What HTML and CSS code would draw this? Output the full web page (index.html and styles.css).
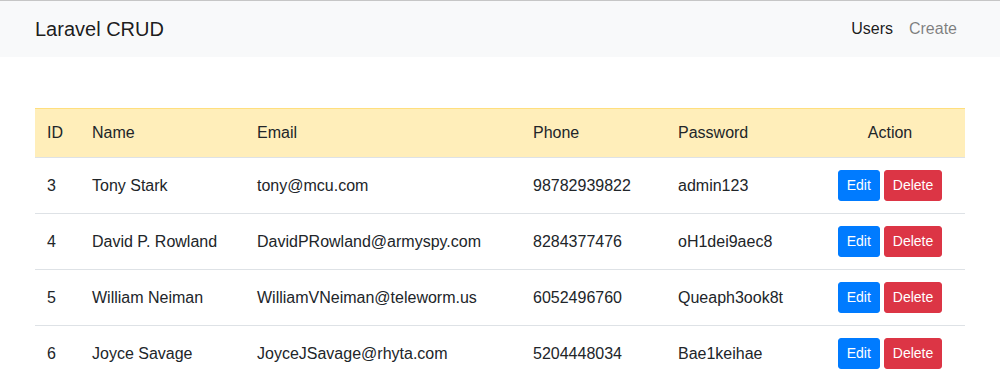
FILE: index.html
```html
<!DOCTYPE html>
<html lang="en">
<head>
  <meta charset="UTF-8">
  <title>Laravel CRUD</title>
  <meta name="viewport" content="width=device-width, initial-scale=1.0">
  <link rel="stylesheet" href="styles.css">
</head>
<body>
  <nav class="navbar">
    <div class="container nav-inner">
      <a class="brand" href="#">Laravel CRUD</a>
      <div class="nav-links">
        <a class="nav-link active" href="#">Users</a>
        <a class="nav-link" href="#">Create</a>
      </div>
    </div>
  </nav>

  <div class="container main">
    <table class="users">
      <thead>
        <tr>
          <th class="c-id">ID</th>
          <th class="c-name">Name</th>
          <th class="c-email">Email</th>
          <th class="c-phone">Phone</th>
          <th class="c-pass">Password</th>
          <th class="c-action">Action</th>
        </tr>
      </thead>
      <tbody>
        <tr>
          <td>3</td>
          <td>Tony Stark</td>
          <td>tony@mcu.com</td>
          <td>98782939822</td>
          <td>admin123</td>
          <td class="c-action"><a class="btn btn-edit" href="#">Edit</a><button class="btn btn-delete">Delete</button></td>
        </tr>
        <tr>
          <td>4</td>
          <td>David P. Rowland</td>
          <td>DavidPRowland@armyspy.com</td>
          <td>8284377476</td>
          <td>oH1dei9aec8</td>
          <td class="c-action"><a class="btn btn-edit" href="#">Edit</a><button class="btn btn-delete">Delete</button></td>
        </tr>
        <tr>
          <td>5</td>
          <td>William Neiman</td>
          <td>WilliamVNeiman@teleworm.us</td>
          <td>6052496760</td>
          <td>Queaph3ook8t</td>
          <td class="c-action"><a class="btn btn-edit" href="#">Edit</a><button class="btn btn-delete">Delete</button></td>
        </tr>
        <tr>
          <td>6</td>
          <td>Joyce Savage</td>
          <td>JoyceJSavage@rhyta.com</td>
          <td>5204448034</td>
          <td>Bae1keihae</td>
          <td class="c-action"><a class="btn btn-edit" href="#">Edit</a><button class="btn btn-delete">Delete</button></td>
        </tr>
      </tbody>
    </table>
  </div>
</body>
</html>
```

FILE: styles.css
```css
* { box-sizing: border-box; margin: 0; padding: 0; }
html, body {
  font-family: "Liberation Sans", Arial, sans-serif;
  font-size: 16px;
  line-height: 1.5;
  color: #212529;
  background-color: #fff;
}
a { text-decoration: none; }
.container {
  width: 100%;
  max-width: 960px;
  margin: 0 auto;
  padding: 0 15px;
}
.navbar {
  border-top: 1px solid #c6c6c6;
  background-color: #f8f9fa;
  padding: 8px 0;
}
.nav-inner {
  display: flex;
  justify-content: space-between;
  align-items: center;
}
.brand {
  font-size: 20px;
  line-height: 30px;
  padding: 5px 0;
  color: rgba(0,0,0,0.9);
}
.nav-links {
  display: flex;
}
.nav-link {
  padding: 8px 8px;
  color: rgba(0,0,0,0.5);
}
.nav-link:last-child { padding-right: 8px; }
.nav-link.active {
  color: rgba(0,0,0,0.9);
}
.main {
  margin-top: 51px;
}
.users {
  width: 100%;
  border-collapse: collapse;
  table-layout: fixed;
}
.users th, .users td {
  padding: 12px;
  text-align: left;
  font-weight: normal;
  vertical-align: middle;
  border-top: 1px solid #dee2e6;
}
.users thead th {
  background-color: #ffeeba;
  border-top-color: #ffdf7e;
  border-bottom: 1px solid #dee2e6;
}
.users td { height: 55px; }
.users tbody tr:first-child td { border-top: none; }
.c-id { width: 45px; }
.c-name { width: 165px; }
.c-email { width: 276px; }
.c-phone { width: 145px; }
.c-pass { width: 149px; }
.users .c-action { text-align: center; }
.btn {
  display: inline-block;
  font-family: inherit;
  font-size: 14px;
  line-height: 21px;
  padding: 4px 8px;
  border-radius: 3px;
  border: 1px solid transparent;
  color: #fff;
  cursor: pointer;
  vertical-align: middle;
}
.btn-edit {
  background-color: #007bff;
  border-color: #007bff;
  margin-right: 4px;
}
.btn-delete {
  background-color: #dc3545;
  border-color: #dc3545;
}
```
